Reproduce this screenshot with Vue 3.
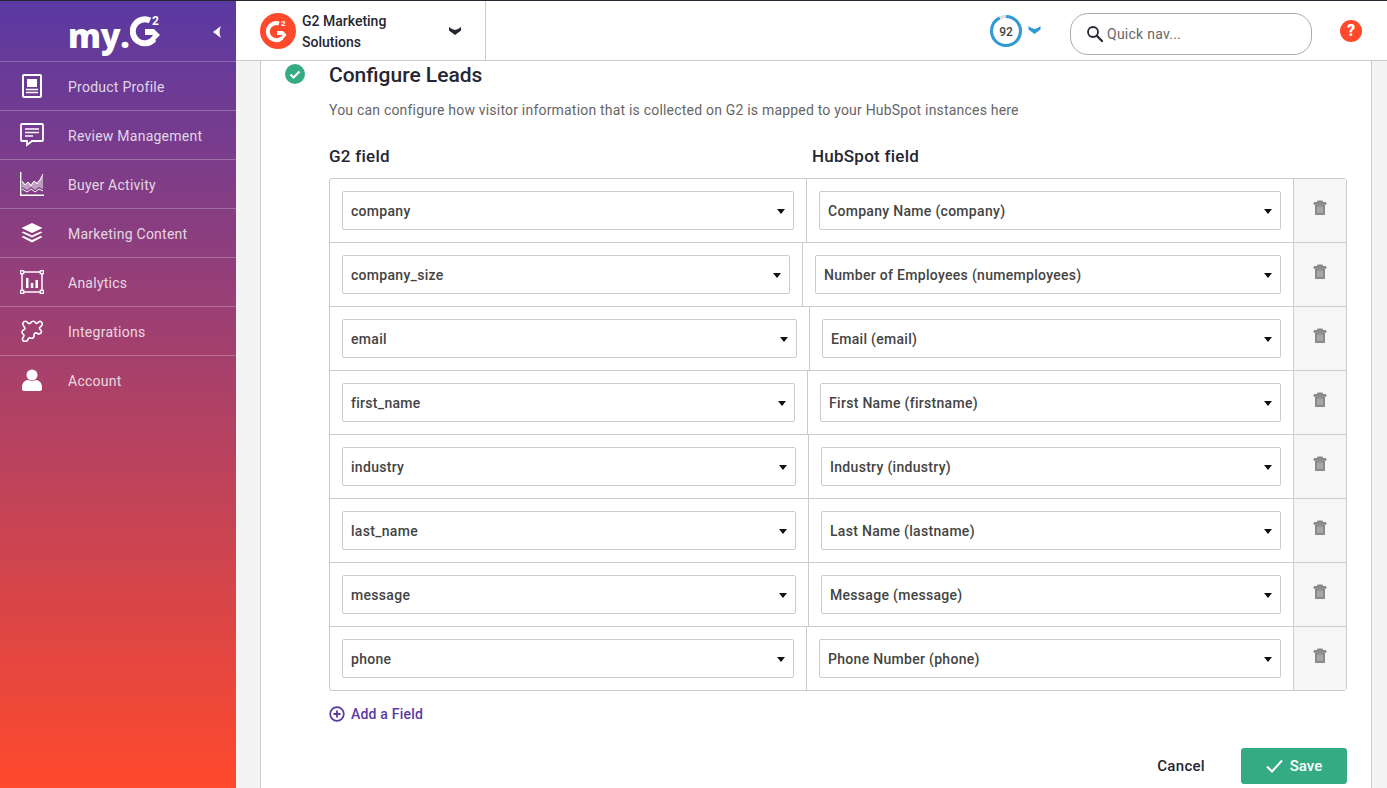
<template>
  <div class="app">
    <aside class="sidebar">
      <div class="brand">
        <div class="logo">
          <span class="logo-text">my.</span>
          <svg width="34" height="34" viewBox="0 0 34 34">
            <path d="M20 6.500A12 12 0 1 0 24 25" fill="none" stroke="#fff" stroke-width="6" />
            <path d="M15 15h9l6 6-8 8-2.500-3 3.500-5h-8z" fill="#fff" />
            <text x="22" y="11" class="logo-sup">2</text>
          </svg>
        </div>
        <svg class="collapse" width="8" height="12" viewBox="0 0 8 12"><path d="M8 0 0 6l8 6C6 8 6 4 8 0z" fill="#fff" /></svg>
      </div>
      <nav>
        <a v-for="item in navItems" :key="item.label" class="nav-item">
          <span class="nav-icon" v-html="item.icon"></span>
          <span class="nav-label">{{ item.label }}</span>
        </a>
      </nav>
    </aside>

    <div class="main">
      <header class="topbar">
        <div class="org">
          <svg class="org-logo" width="36" height="36" viewBox="0 0 36 36">
            <circle cx="18" cy="18" r="18" fill="#ff492c" />
            <path d="M19 10.500A8.500 8.500 0 1 0 22 25" fill="none" stroke="#fff" stroke-width="4" />
            <path d="M17 18h6l3.500 4-4.500 5-1.500-2 2-3h-5.500z" fill="#fff" />
            <text x="21" y="13" class="org-sup">2</text>
          </svg>
          <div class="org-name">G2 Marketing<br />Solutions</div>
          <svg class="org-chevron" width="12" height="8" viewBox="0 0 12 8"><path d="M0 0C2 1.500 4 2.500 6 3c2-.5 4-1.500 6-3v3.500L6 8 0 3.500z" fill="#262633" /></svg>
        </div>
        <div class="score">
          <svg width="34" height="34" viewBox="0 0 34 34">
            <circle cx="17" cy="17" r="14.500" fill="none" stroke="#ddd" stroke-width="3" />
            <circle cx="17" cy="17" r="14.500" fill="none" stroke="#2f9ad6" stroke-width="3" stroke-dasharray="84 91.100" transform="rotate(-90 17 17)" />
            <text x="17" y="21.500" class="score-text" text-anchor="middle">92</text>
          </svg>
          <svg class="score-chevron" width="13" height="8" viewBox="0 0 12 8"><path d="M0 0C2 1.500 4 2.500 6 3c2-.5 4-1.500 6-3v3.500L6 8 0 3.500z" fill="#2f9ad6" /></svg>
        </div>
        <div class="search">
          <svg width="18" height="18" viewBox="0 0 18 18"><circle cx="7" cy="7" r="5" fill="none" stroke="#262633" stroke-width="1.800" /><path d="M10.800 10.800 16 16" stroke="#262633" stroke-width="2.200" stroke-linecap="round" /></svg>
          <span>Quick nav...</span>
        </div>
        <div class="help">?</div>
      </header>

      <div class="content">
        <section class="card">
          <div class="title-row">
            <svg class="done" width="20" height="20" viewBox="0 0 20 20"><circle cx="10" cy="10" r="10" fill="#34ab82" /><path d="m5.500 10.500 3 3 6-6" fill="none" stroke="#fff" stroke-width="2.200" /></svg>
            <h2>Configure Leads</h2>
          </div>
          <p class="desc">You can configure how visitor information that is collected on G2 is mapped to your HubSpot instances here</p>
          <div class="heads">
            <span class="head-left">G2 field</span>
            <span>HubSpot field</span>
          </div>
          <div class="table">
            <div v-for="row in rows" :key="row.g2" class="row">
              <div class="cell left" :style="{ width: row.left + 'px' }">
                <div class="select"><span>{{ row.g2 }}</span><i class="caret"></i></div>
              </div>
              <div class="cell right">
                <div class="select"><span>{{ row.hub }}</span><i class="caret"></i></div>
              </div>
              <div class="trash">
                <svg width="14" height="15" viewBox="0 0 14 15">
                  <path d="M1 2.500h12v1.800H1zM4.500 2.500V1h5v1.500" fill="#8a8a8a" stroke="#8a8a8a" stroke-width="1" />
                  <path d="M2 4.500h10V14a1 1 0 0 1-1 1H3a1 1 0 0 1-1-1z" fill="#8a8a8a" />
                  <path d="M5 6.500v6.500M7 6.500v6.500M9 6.500v6.500" stroke="#c8c8c8" stroke-width=".9" />
                </svg>
              </div>
            </div>
          </div>
          <a class="add">
            <svg width="16" height="16" viewBox="0 0 16 16"><circle cx="8" cy="8" r="6.800" fill="none" stroke="#5a39a2" stroke-width="1.700" /><path d="M8 4.500v7M4.500 8h7" stroke="#5a39a2" stroke-width="1.800" /></svg>
            <span>Add a Field</span>
          </a>
          <div class="actions">
            <button class="cancel">Cancel</button>
            <button class="save">
              <svg width="17" height="14" viewBox="0 0 17 14"><path d="m1 7.500 5 5L16 1.500" fill="none" stroke="#fff" stroke-width="2" /></svg>
              <span>Save</span>
            </button>
          </div>
        </section>
      </div>
    </div>
  </div>
</template>

<script setup>
const navItems = [
  {
    label: 'Product Profile',
    icon: '<svg width="20" height="24" viewBox="0 0 20 24"><rect x="1" y="1" width="18" height="22" rx="1" fill="none" stroke="#fff" stroke-width="2"/><rect x="5" y="5" width="10" height="8" fill="#fff"/><path d="M4 15.500h12M4 18.500h12" stroke="#fff" stroke-width="1.500"/></svg>'
  },
  {
    label: 'Review Management',
    icon: '<svg width="24" height="24" viewBox="0 0 24 24"><path d="M2 1h20a1 1 0 0 1 1 1v15a1 1 0 0 1-1 1H12l-5 4v-4H2a1 1 0 0 1-1-1V2a1 1 0 0 1 1-1z" fill="none" stroke="#fff" stroke-width="1.800"/><path d="M5 6h14M5 9.500h14M5 13h8" stroke="#fff" stroke-width="1.600"/></svg>'
  },
  {
    label: 'Buyer Activity',
    icon: '<svg width="24" height="24" viewBox="0 0 24 24"><path d="M.7 0v23.300H24" fill="none" stroke="#fff" stroke-width="1.400"/><path d="M2 9l3 3 3-2 3 2 3-3 3 1 3-3 3-4v14l-4-2-4 3-4-3-4 3-5-3z" fill="#fff" fill-opacity=".5"/><path d="M2 9l3 4 3-3 3 4 3-5 3 3 3-4 3-6M2 17l5 3 4-3 4 3 4-3 4 2" fill="none" stroke="#fff" stroke-width="1"/></svg>'
  },
  {
    label: 'Marketing Content',
    icon: '<svg width="22" height="20" viewBox="0 0 22 20"><path d="M11 0l10.500 5L11 10 .5 5z" fill="#fff"/><path d="M2.500 8.500 11 12.500l8.500-4 2 1L11 14.500.5 9.500z" fill="#fff"/><path d="M2.500 13 11 17l8.500-4 2 1L11 19.500.5 14z" fill="#fff"/></svg>'
  },
  {
    label: 'Analytics',
    icon: '<svg width="24" height="24" viewBox="0 0 24 24"><rect x="2" y="2" width="20" height="20" fill="none" stroke="#fff" stroke-width="1.500"/><g fill="none" stroke="#fff" stroke-width="1.300"><rect x=".7" y=".7" width="3" height="3" fill="#7f3f86"/><rect x="20.300" y=".7" width="3" height="3" fill="#7f3f86"/><rect x=".7" y="20.300" width="3" height="3" fill="#7f3f86"/><rect x="20.300" y="20.300" width="3" height="3" fill="#7f3f86"/></g><path d="M6 8h2.500v10H6zM10.800 13h2.500v5h-2.500zM15.500 10H18v8h-2.500z" fill="#fff"/></svg>'
  },
  {
    label: 'Integrations',
    icon: '<svg width="22" height="22" viewBox="0 0 22 22"><path d="M2 3C3 .5 6 1 6.500 2.500 7.500 4 9 4 10 2.500 11 .5 13.500 1 14.500 2.500 15 4 16 4 17.500 2 19.500.5 22 2.500 21 5c-.5 1.500-2 1.500-2.500 3-.5 1.500 2 1.500 2 3.500 0 2.500-3 3-5 1.500-1.500-.5-2.500.5-2.500 2 .5 2-1 4-3.500 3-1.500-.5-2.500.5-2.500 1.500-1 2.500-5 2.500-5.500 0C1 18 3 17 3 15.500S1 14 1 12s2.500-2 3-3.500C4 7 1 5.500 2 3z" fill="none" stroke="#fff" stroke-width="1.600"/></svg>'
  },
  {
    label: 'Account',
    icon: '<svg width="20" height="22" viewBox="0 0 20 22"><circle cx="10" cy="6" r="5.500" fill="#fff"/><path d="M0 18c0-4 3-7 6-7 2.500 1.500 5.500 1.500 8 0 3 0 6 3 6 7v2a2 2 0 0 1-2 2H2a2 2 0 0 1-2-2z" fill="#fff"/></svg>'
  }
]

const rows = [
  { g2: 'company', hub: 'Company Name (company)', left: 477 },
  { g2: 'company_size', hub: 'Number of Employees (numemployees)', left: 473 },
  { g2: 'email', hub: 'Email (email)', left: 480 },
  { g2: 'first_name', hub: 'First Name (firstname)', left: 478 },
  { g2: 'industry', hub: 'Industry (industry)', left: 479 },
  { g2: 'last_name', hub: 'Last Name (lastname)', left: 479 },
  { g2: 'message', hub: 'Message (message)', left: 479 },
  { g2: 'phone', hub: 'Phone Number (phone)', left: 477 }
]
</script>

<style>
html,
body {
  margin: 0;
  height: 100%;
  overflow: hidden;
}
</style>

<style scoped>
* {
  box-sizing: border-box;
}

.app {
  display: flex;
  height: 788px;
  font-family: Roboto, "Liberation Sans", sans-serif;
  color: #262633;
  border-top: 1px solid #262633;
  overflow: hidden;
}

.sidebar {
  width: 236px;
  flex-shrink: 0;
  background: linear-gradient(180deg, #5a39a2 0%, #ff492c 100%);
  color: rgba(255, 255, 255, 0.8);
}

.brand {
  position: relative;
  height: 61px;
  display: flex;
  align-items: center;
  padding-left: 68px;
  border-bottom: 1px solid rgba(255, 255, 255, 0.25);
}

.logo {
  display: flex;
  align-items: flex-end;
  height: 44px;
}

.logo-text {
  font-family: "Open Sans", sans-serif;
  font-size: 33px;
  line-height: 42px;
  font-weight: 800;
  color: #fff;
  letter-spacing: -0.5px;
  margin-bottom: -4px;
}

.logo svg {
  margin-left: 1px;
  margin-bottom: 5px;
}

.logo-sup {
  font-size: 12px;
  font-weight: 700;
  fill: #fff;
}

.collapse {
  position: absolute;
  left: 213px;
  top: 25px;
}

.nav-item {
  display: flex;
  align-items: center;
  height: 49px;
  font-size: 14px;
  letter-spacing: 0.25px;
  border-bottom: 1px solid rgba(255, 255, 255, 0.25);
}

.nav-item:last-child {
  height: 48px;
  border-bottom: none;
}

.nav-label {
  margin-top: 2px;
}

.nav-icon {
  width: 64px;
  margin-right: 4px;
  display: flex;
  justify-content: center;
}

.main {
  flex: 1;
  min-width: 0;
  display: flex;
  flex-direction: column;
}

.topbar {
  height: 60px;
  flex-shrink: 0;
  display: flex;
  align-items: center;
  background: #fff;
  border-bottom: 1px solid #ccc;
}

.org {
  width: 250px;
  height: 100%;
  padding-left: 24px;
  display: flex;
  align-items: center;
  border-right: 1px solid #ccc;
}

.org-logo {
  flex-shrink: 0;
}

.org-sup {
  font-size: 8px;
  font-weight: 700;
  fill: #fff;
}

.org-name {
  margin-left: 6px;
  width: 147px;
  font-size: 14px;
  line-height: 21px;
  font-weight: 500;
  padding-top: 2px;
}

.org-chevron {
  margin-top: 1px;
}

.score {
  margin-left: 503px;
  display: flex;
  align-items: center;
}

.score-text {
  font-size: 12px;
  font-weight: 500;
  fill: #444;
}

.score-chevron {
  margin-left: 5px;
  margin-top: -1px;
}

.search {
  margin-left: 29px;
  margin-top: 6px;
  width: 242px;
  height: 42px;
  border: 1px solid #aaa;
  border-radius: 18px;
  display: flex;
  align-items: center;
  padding-left: 15px;
  font-size: 14px;
  letter-spacing: 0.25px;
  color: #666;
}

.search span {
  margin-left: 3px;
}

.help {
  margin-left: 28px;
  width: 22px;
  height: 22px;
  border-radius: 50%;
  background: #ff492c;
  color: #fff;
  font-size: 16px;
  font-weight: 900;
  text-align: center;
  line-height: 22px;
}

.content {
  flex: 1;
  background: #f3f3f3;
  padding: 0 15px 0 24px;
  min-height: 0;
}

.card {
  height: 100%;
  background: #fff;
  border-left: 1px solid #ccc;
  border-right: 1px solid #ccc;
  padding: 0 24px 0 24px;
}

.title-row {
  display: flex;
  align-items: center;
  height: 28px;
}

.done {
  flex-shrink: 0;
  margin-top: -2px;
}

h2 {
  margin: 0 0 0 24px;
  font-size: 21px;
  font-weight: 500;
  line-height: 28px;
}

.desc {
  margin: 11px 0 0 44px;
  font-size: 14px;
  line-height: 20px;
  letter-spacing: 0.2px;
  color: #666;
}

.heads {
  display: flex;
  margin: 26px 0 0 44px;
  font-size: 17px;
  line-height: 20px;
  font-weight: 500;
  letter-spacing: 0.25px;
}

.head-left {
  width: 483px;
}

.table {
  margin: 12px 0 0 44px;
  border: 1px solid #ccc;
  border-radius: 3px;
}

.row {
  display: flex;
  height: 64px;
  border-bottom: 1px solid #ccc;
}

.row:last-child {
  height: 63px;
  border-bottom: none;
}

.cell {
  padding: 12px;
  flex-shrink: 0;
}

.cell.left {
  border-right: 1px solid #ccc;
}

.cell.right {
  flex: 1;
  min-width: 0;
}

.select {
  height: 39px;
  border: 1px solid #ccc;
  border-radius: 2px;
  padding: 0 8px;
  display: flex;
  align-items: center;
  justify-content: space-between;
  font-size: 14px;
  font-weight: 500;
  letter-spacing: 0.3px;
  color: #444;
}

.caret {
  width: 0;
  height: 0;
  border-left: 4.500px solid transparent;
  border-right: 4.500px solid transparent;
  border-top: 5px solid #111;
  margin-top: 1px;
}

.trash {
  width: 53px;
  flex-shrink: 0;
  background: #f6f6f6;
  border-left: 1px solid #ccc;
  display: flex;
  justify-content: center;
  padding-top: 21px;
}

.add {
  display: flex;
  align-items: center;
  gap: 6px;
  margin: 14px 0 0 44px;
  height: 18px;
  font-size: 14px;
  font-weight: 500;
  letter-spacing: 0.2px;
  color: #5a39a2;
}

.actions {
  display: flex;
  justify-content: flex-end;
  align-items: center;
  margin-top: 25px;
}

.actions button {
  font-family: inherit;
  font-size: 15px;
  font-weight: 500;
  border: none;
}

.cancel {
  background: none;
  color: #262633;
  padding: 0;
  margin-right: 36px;
  letter-spacing: 0.3px;
}

.save {
  width: 106px;
  height: 36px;
  background: #34ab82;
  border-radius: 3px;
  color: #fff;
  display: flex;
  align-items: center;
  justify-content: center;
  gap: 7px;
}
</style>
